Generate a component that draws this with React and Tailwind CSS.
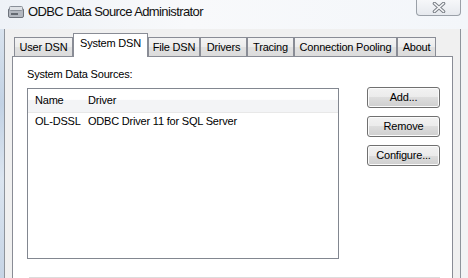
import React from 'react';

const tabs = [
  { label: 'User DSN', w: 'w-[59px]' },
  { label: 'System DSN', w: 'w-[75px]', active: true },
  { label: 'File DSN', w: 'w-[52px]' },
  { label: 'Drivers', w: 'w-[47px]' },
  { label: 'Tracing', w: 'w-[47px]' },
  { label: 'Connection Pooling', w: 'w-[103px]' },
  { label: 'About', w: 'w-[39px]' },
];

const sources = [{ name: 'OL-DSSL', driver: 'ODBC Driver 11 for SQL Server' }];

const TitleIcon = () => (
  <svg width="18" height="14" viewBox="0 0 18 14">
    <rect x="1.5" y="3.5" width="15" height="9" rx="1.5" fill="#b3b8c0" stroke="#6d737c" />
    <rect x="2.5" y="1.5" width="13" height="4" rx="1" fill="#dfe2e6" stroke="#8a9099" />
    <rect x="4" y="8" width="7" height="2" fill="#646a72" />
  </svg>
);

const CloseGlyph = () => (
  <svg width="14" height="11" viewBox="0 0 14 11">
    <path d="M2.5 1.5 L11.5 9.5 M11.5 1.5 L2.5 9.5" stroke="#7a7f86" strokeWidth="3.6" strokeLinecap="round" />
    <path d="M2.5 1.5 L11.5 9.5 M11.5 1.5 L2.5 9.5" stroke="#f7f8fa" strokeWidth="1.6" strokeLinecap="round" />
  </svg>
);

const Button = ({ children }) => (
  <button className="h-[21px] w-[73px] rounded-[3px] border border-[#707070] bg-[linear-gradient(#f2f2f2_0%,#ebebeb_50%,#dddddd_50%,#cfcfcf_100%)] text-[11px] leading-[19px] tracking-[-0.2px] text-black shadow-[inset_0_0_0_1px_#fbfbfb]">
    {children}
  </button>
);

export default function App() {
  return (
    <div className="flex h-[278px] w-[468px] flex-col overflow-hidden bg-[#f4f6f9] font-['Liberation_Sans',Arial,sans-serif] text-black">
      {/* title bar */}
      <div className="flex h-[29px] shrink-0 items-start bg-[linear-gradient(90deg,#eef2f7,#f8f9fb_40%,#f3f6fa)]">
        <div className="ml-[7px] mt-[5px]">
          <TitleIcon />
        </div>
        <span className="ml-[3px] mt-[4px] text-[13px] leading-[16px] tracking-[-0.6px] text-[#111]">
          ODBC Data Source Administrator
        </span>
        <div className="ml-auto mr-[7px] -mt-px flex h-[17px] w-[45px] items-center justify-center rounded-b-[4px] border border-t-0 border-[#9aa0a8] bg-[linear-gradient(#f7f8fa,#e6e9ee)]">
          <CloseGlyph />
        </div>
      </div>

      {/* frame + client */}
      <div className="flex min-h-0 flex-1">
        <div className="w-[4px] bg-[linear-gradient(#d9e3ee,#c2d2e4_30%,#dbe5f0_60%,#c6d4e5)]" />
        <div className="flex w-[457px] flex-col border-x border-[#8e949c] bg-[#f0f0f0]">
          {/* tabs */}
          <div className="ml-[9px] mt-[4px] flex h-[23px] items-end">
            {tabs.map((t) =>
              t.active ? (
                <div
                  key={t.label}
                  className={`relative z-10 -mb-px flex h-[24px] justify-center border-x border-t border-[#898c95] bg-white pt-[2px] text-[11px] leading-[14px] tracking-[-0.2px] ${t.w}`}
                >
                  {t.label}
                </div>
              ) : (
                <div
                  key={t.label}
                  className={`flex h-[19px] items-center justify-center border-x border-t border-[#898c95] bg-[linear-gradient(#f3f3f3_0%,#ececec_50%,#e1e1e1_50%,#dcdcdc_100%)] text-[11px] leading-[14px] tracking-[-0.2px] ${t.w}`}
                >
                  {t.label}
                </div>
              )
            )}
          </div>

          {/* panel */}
          <div className="ml-[7px] flex w-[441px] flex-1 flex-col border-x border-t border-[#898c95] bg-white pl-[14px] pt-[10px]">
            <div className="text-[11px] leading-[14px] tracking-[-0.2px]">System Data Sources:</div>
            <div className="mt-[7px] flex">
              <div className="flex h-[171px] w-[312px] flex-col border border-[#828790] bg-white">
                <div className="flex h-[24px] border-b border-[#e8e8e8] bg-[linear-gradient(#ffffff_0%,#ffffff_45%,#f3f4f6_50%,#f3f4f6_100%)] text-[11px] leading-[23px] tracking-[-0.2px]">
                  <div className="w-[55px] pl-[7px]">Name</div>
                  <div className="pl-[5px]">Driver</div>
                </div>
                {sources.map((s) => (
                  <div key={s.name} className="flex h-[17px] text-[11px] leading-[17px] tracking-[-0.2px]">
                    <div className="w-[55px] pl-[7px]">{s.name}</div>
                    <div className="pl-[5px]">{s.driver}</div>
                  </div>
                ))}
              </div>
              <div className="-mt-px ml-[28px] flex flex-col gap-[8px]">
                <Button>Add...</Button>
                <Button>Remove</Button>
                <Button>Configure...</Button>
              </div>
            </div>
            <div className="ml-[2px] mt-[18px] h-[10px] w-[411px] border-t border-[#dcdcdc]" />
          </div>
        </div>
        <div className="flex-1 bg-[#f2f3f5]" />
      </div>
    </div>
  );
}
